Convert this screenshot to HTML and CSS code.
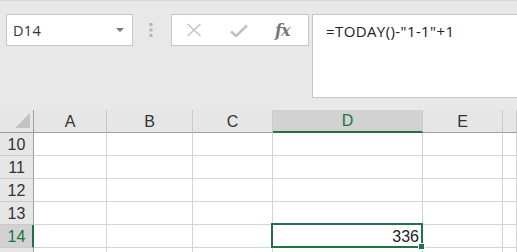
FILE: index.html
```html
<!DOCTYPE html>
<html>
<head>
<meta charset="utf-8">
<link rel="stylesheet" href="styles.css">
</head>
<body>
<div class="app">
  <div class="toolbar">
    <div class="namebox">
      <span class="name">D14</span>
      <svg class="drop" width="8" height="5" viewBox="0 0 8 5"><path d="M0 0 L8 0 L4 4 Z" fill="#7a7a7a"/></svg>
    </div>
    <div class="grip">
      <svg width="4" height="14" viewBox="0 0 4 14"><rect x="0.5" y="0" width="3" height="3" fill="#b3b3b3"/><rect x="0.5" y="5.5" width="3" height="3" fill="#b3b3b3"/><rect x="0.5" y="11" width="3" height="3" fill="#b3b3b3"/></svg>
    </div>
    <div class="fnbox">
      <svg class="ico" width="16" height="14" viewBox="0 0 16 14"><path d="M1.5 1 L14.5 13 M14.5 1 L1.5 13" stroke="#c2c2c2" stroke-width="1.4" fill="none"/></svg>
      <svg class="ico" width="18" height="14" viewBox="0 0 18 14"><path d="M1 7.5 L6 12 L17 1.5" stroke="#c2c2c2" stroke-width="2.6" fill="none"/></svg>
      <span class="fx">fx</span>
    </div>
    <div class="formula">=TODAY()-"1-1"+1</div>
  </div>
  <div class="sheet">
    <div class="corner"><span class="tri"></span></div>
    <div class="ch">A</div>
    <div class="ch">B</div>
    <div class="ch">C</div>
    <div class="ch sel">D</div>
    <div class="ch">E</div>
    <div class="ch last"></div>

    <div class="rh">10</div><div class="c"></div><div class="c"></div><div class="c"></div><div class="c"></div><div class="c"></div><div class="c"></div>
    <div class="rh">11</div><div class="c"></div><div class="c"></div><div class="c"></div><div class="c"></div><div class="c"></div><div class="c"></div>
    <div class="rh">12</div><div class="c"></div><div class="c"></div><div class="c"></div><div class="c"></div><div class="c"></div><div class="c"></div>
    <div class="rh">13</div><div class="c"></div><div class="c"></div><div class="c"></div><div class="c"></div><div class="c"></div><div class="c"></div>
    <div class="rh sel">14</div><div class="c"></div><div class="c"></div><div class="c"></div><div class="c active">336<span class="handle"></span></div><div class="c"></div><div class="c"></div>
    <div class="rh"></div><div class="c"></div><div class="c"></div><div class="c"></div><div class="c"></div><div class="c"></div><div class="c"></div>
  </div>
</div>
</body>
</html>
```

FILE: styles.css
```css
html, body {
  margin: 0;
  padding: 0;
  background: #e8e8e8;
  overflow: hidden;
}
.app {
  width: 517px;
  height: 252px;
  overflow: hidden;
  font-family: "Liberation Sans", Arial, sans-serif;
}
.toolbar {
  border-top: 1px solid #d9d9d9;
  box-sizing: border-box;
  height: 110px;
  padding-top: 13px;
  display: flex;
  align-items: flex-start;
  background: #e8e8e8;
}
.namebox {
  margin-left: 6px;
  width: 127px;
  height: 32px;
  box-sizing: border-box;
  background: #fff;
  border: 1px solid #c6c6c6;
  display: flex;
  align-items: center;
  padding-left: 6px;
  padding-right: 8px;
}
.name {
  flex: 1;
  font-family: "Open Sans", "Noto Sans", sans-serif;
  font-size: 14.5px;
  letter-spacing: 0.3px;
  color: #333;
}
.drop {
  display: block;
  margin-top: 1px;
}
.grip {
  width: 38px;
  height: 32px;
  display: flex;
  align-items: center;
  justify-content: center;
}
.grip svg { display: block; margin-left: -2px; }
.fnbox {
  width: 138px;
  height: 32px;
  box-sizing: border-box;
  background: #fff;
  border: 1px solid #c6c6c6;
  display: flex;
  align-items: center;
  padding-left: 14px;
}
.ico { display: block; }
.ico + .ico { margin-left: 28px; margin-top: 1px; }
.fx {
  margin-left: 27px;
  font-family: "DejaVu Serif", "Liberation Serif", serif;
  font-style: italic;
  font-weight: bold;
  font-size: 16px;
  color: #777;
  letter-spacing: -1px;
}
.formula {
  margin-left: 3px;
  flex: 1;
  height: 84px;
  box-sizing: border-box;
  background: #fff;
  border: 1px solid #c6c6c6;
  border-right: none;
  padding: 6px 0 0 13px;
  font-family: "Open Sans", "Noto Sans", sans-serif;
  font-size: 15px;
  letter-spacing: 0.4px;
  color: #222;
}
.sheet {
  display: grid;
  grid-template-columns: 34px 73px 86px 80px 150px 80px 1fr;
  grid-template-rows: 23px repeat(6, 23px);
  background: #fff;
}
.corner, .ch, .rh, .c {
  box-sizing: border-box;
}
.corner {
  background: #e6e6e6;
  border-right: 1px solid #9e9e9e;
  border-bottom: 1px solid #9e9e9e;
  display: flex;
  align-items: flex-end;
  justify-content: flex-end;
  padding: 0 3px 4px 0;
}
.tri {
  width: 0;
  height: 0;
  border-left: 15px solid transparent;
  border-bottom: 15px solid #c2c2c2;
}
.ch {
  background: #e6e6e6;
  border-right: 1px solid #cacaca;
  border-bottom: 1px solid #9e9e9e;
  font-size: 16px;
  color: #333;
  text-align: center;
  line-height: 23px;
}
.ch.sel {
  background: #d2d2d2;
  color: #217346;
  border-bottom: 2px solid #217346;
  line-height: 22px;
}
.rh {
  background: #e6e6e6;
  border-right: 1px solid #9e9e9e;
  border-bottom: 1px solid #cacaca;
  font-size: 16px;
  color: #333;
  text-align: center;
  line-height: 23px;
}
.rh.sel {
  background: #d2d2d2;
  color: #217346;
  border-right: 2px solid #217346;
  padding-left: 1px;
}
.c {
  border-right: 1px solid #d4d4d4;
  border-bottom: 1px solid #d4d4d4;
  font-size: 16px;
  color: #222;
}
.c.active {
  position: relative;
  text-align: right;
  padding-right: 3px;
  line-height: 24px;
}
.c.active::after {
  content: "";
  position: absolute;
  left: -2px;
  top: -2px;
  right: -1px;
  bottom: -1px;
  border: 2px solid #217346;
  pointer-events: none;
}
.handle {
  position: absolute;
  width: 5px;
  height: 5px;
  right: -3px;
  bottom: -3px;
  background: #217346;
  border: 1px solid #fff;
  z-index: 2;
}
```
